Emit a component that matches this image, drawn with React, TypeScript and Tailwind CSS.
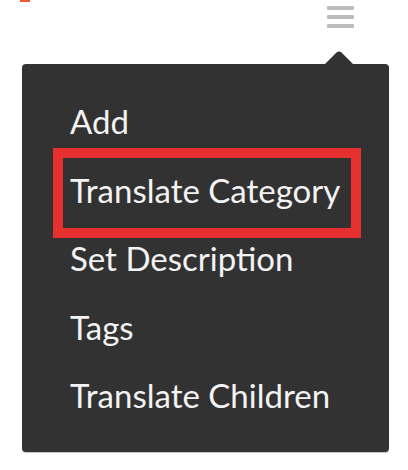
import React from "react";

const items = ["Add", "Translate Category", "Set Description", "Tags", "Translate Children"];

export default function App() {
  return (
    <div className="relative w-[408px] h-[470px] bg-white overflow-hidden" style={{ fontFamily: "Lato, 'Noto Sans', sans-serif" }}>
      <div className="flex h-[64px]">
        <div className="ml-[20px] w-[10px] h-[2px] bg-[#f05a32]" />
        <div className="ml-auto mr-[54px] mt-[6px] flex flex-col gap-[5px] w-[27px]">
          <div className="h-[4px] rounded-[1px] bg-[#bdbdbd]" />
          <div className="h-[4px] rounded-[1px] bg-[#bdbdbd]" />
          <div className="h-[4px] rounded-[1px] bg-[#bdbdbd]" />
        </div>
      </div>
      <div className="relative ml-[22px] w-[367px] h-[388px] rounded-[4px] bg-[#323232] shadow-[0_1px_1px_rgba(0,0,0,0.25)] pt-[23px] pl-[48px]">
        <svg className="absolute left-[302px] top-[-13px]" width="30" height="14" viewBox="0 0 30 14">
          <path d="M0 14 L12.5 1.6 Q15 -0.6 17.5 1.6 L30 14 Z" fill="#323232" />
        </svg>
        {items.map((t, i) => (
          <div key={t} className="relative h-[68.5px] leading-[68.5px] text-[33px] text-[#f3f3f3] whitespace-nowrap">
            {i === 1 && (
              <div className="absolute left-[-17px] top-[-8px] w-[308px] h-[90px] border-[10px] border-[#e5302f]" />
            )}
            <span className="relative">{t}</span>
          </div>
        ))}
      </div>
    </div>
  );
}
